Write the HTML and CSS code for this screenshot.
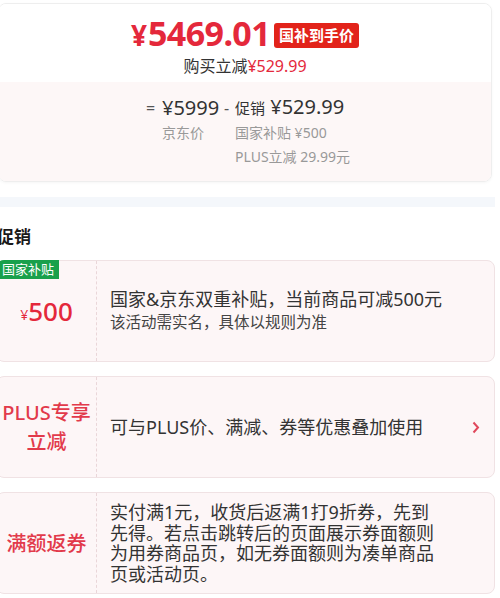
FILE: index.html
```html
<html>
<head>
<meta http-equiv="Content-Type" content="text/html; charset=utf-8">
<title>促销</title>
<link rel="stylesheet" href="styles.css">
</head>
<body>
<div class="page">

  <!-- price summary -->
  <div class="price-card">
    <div class="price-main">
      <div class="price-row">
        <span class="yen">¥</span><span class="num">5469.01</span>
        <span class="price-tag">国补到手价</span>
      </div>
      <div class="price-sub">购买立减<span class="red">¥529.99</span></div>
    </div>
    <div class="price-break">
      <div class="break-grid">
        <span class="op">=</span>
        <span class="amt">¥5999</span>
        <span class="op">-</span>
        <span class="amt"><span class="amt-label">促销</span> ¥529.99</span>

        <span></span>
        <span class="lbl">京东价</span>
        <span></span>
        <span class="lbl">国家补贴 ¥500</span>

        <span></span>
        <span></span>
        <span></span>
        <span class="lbl">PLUS立减 29.99元</span>
      </div>
    </div>
  </div>

  <div class="strip"></div>

  <!-- promotions -->
  <div class="promo-title">促销</div>

  <div class="promo-card">
    <span class="green-tag">国家补贴</span>
    <div class="promo-left"><span class="small-yen">¥</span><span class="big-num">500</span></div>
    <div class="promo-right">
      <div class="promo-text">
        <div class="line-main">国家&amp;京东双重补贴，当前商品可减500元</div>
        <div class="line-sub">该活动需实名，具体以规则为准</div>
      </div>
      <div class="promo-arrow"></div>
    </div>
  </div>

  <div class="promo-card">
    <div class="promo-left"><span class="promo-name">PLUS专享<br>立减</span></div>
    <div class="promo-right">
      <div class="promo-text">
        <div class="line-main">可与PLUS价、满减、券等优惠叠加使用</div>
      </div>
      <div class="promo-arrow">
        <svg width="8" height="13" viewBox="0 0 8 13"><polyline points="1.5,1.5 6,6.5 1.5,11.5" fill="none" stroke="#e0485c" stroke-width="2"/></svg>
      </div>
    </div>
  </div>

  <div class="promo-card">
    <div class="promo-left"><span class="promo-name">满额返券</span></div>
    <div class="promo-right">
      <div class="promo-text">
        <div class="line-main">实付满1元，收货后返满1打9折券，先到先得。若点击跳转后的页面展示券面额则为用券商品页，如无券面额则为凑单商品页或活动页。</div>
      </div>
      <div class="promo-arrow"></div>
    </div>
  </div>

</div>
</body>
</html>
```
FILE: styles.css
```css
html, body {
  margin: 0;
  background: #fff;
  font-family: "Noto Sans", "Noto Sans CJK SC", sans-serif;
  color: #333;
}

.page { margin-left: -4px; width: 499px; }

.red { color: #e4283b; }

/* price summary card */
.price-card {
  margin: 3px 3px 0 2px;
  border: 1px solid #eeeeee;
  border-radius: 8px;
  overflow: hidden;
  box-shadow: 0 1px 3px rgba(0,0,0,0.04);
}
.price-main {
  background: #fff;
  height: 78px;
  display: flex;
  flex-direction: column;
  align-items: center;
}
.price-row { display: flex; align-items: baseline; margin-top: 11px; height: 36px; }
.yen { color: #e4283b; font-size: 28px; font-weight: 700; margin-right: 1px; }
.num { color: #e4283b; font-size: 34px; font-weight: 700; line-height: 36px; letter-spacing: -0.6px; }
.price-tag {
  align-self: flex-start;
  background: #e2231a;
  color: #fff;
  font-size: 15px;
  font-weight: 700;
  padding: 0 5px;
  height: 25px;
  line-height: 25px;
  border-radius: 3px;
  margin-left: 4px;
  margin-top: 8px;
}
.price-sub { font-size: 16px; line-height: 20px; margin-top: 5px; color: #333; }

.price-break {
  background: #fdf7f7;
  height: 99px;
  display: flex;
  justify-content: center;
}
.break-grid {
  display: grid;
  grid-template-columns: 16px 62px 11px auto;
  align-items: center;
  margin-top: 12px;
  margin-left: 6px;
  align-self: flex-start;
}
.op { font-size: 16px; color: #555; }
.amt { font-size: 20px; color: #333; line-height: 26px; }
.amt-label { font-size: 15px; }
.lbl { font-size: 14px; color: #999; line-height: 24px; }

.strip { margin-top: 15px; height: 10px; background: #f4f7fb; }

/* promotions */
.promo-title {
  font-size: 17px;
  font-weight: 700;
  color: #1a1a1a;
  line-height: 24px;
  margin: 18px 0 11px 1px;
}

.promo-card {
  position: relative;
  display: flex;
  min-height: 100px;
  background: #fdf6f7;
  border: 1px solid #f0e2e4;
  border-radius: 8px;
  margin-bottom: 14px;
}
.green-tag {
  position: absolute;
  top: -1px;
  left: -1px;
  background: #19a04b;
  color: #fff;
  font-size: 13px;
  line-height: 19px;
  padding: 0 5px 0 6px;
  border-top-left-radius: 8px;
}
.promo-left {
  width: 99px;
  border-right: 1px dashed #ead6d9;
  display: flex;
  align-items: center;
  justify-content: center;
  text-align: center;
}
.small-yen { color: #e4283b; font-size: 14px; margin-top: 6px; }
.big-num { color: #e4283b; font-size: 26px; font-weight: 500; }
.promo-name { color: #e23a4b; font-size: 20px; line-height: 29px; font-weight: 500; }

.promo-right {
  flex: 1;
  display: flex;
  align-items: center;
  padding-left: 13px;
}
.promo-text { width: 333px; }
.line-main { font-size: 18px; line-height: 20.5px; color: #333; }
.line-sub { font-size: 15.5px; line-height: 22px; color: #444; margin-top: 2px; }
.promo-arrow { flex: 1; display: flex; justify-content: flex-end; padding-right: 14px; }
```
